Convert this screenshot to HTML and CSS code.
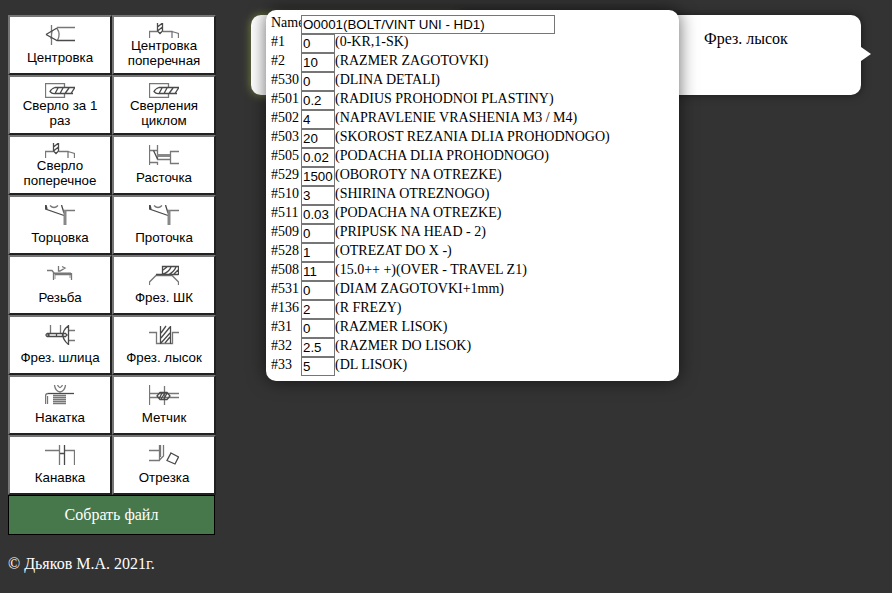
FILE: index.html
```html
<!DOCTYPE html>
<html lang="ru">
<head>
<meta charset="utf-8">
<title>O0001</title>
<link rel="stylesheet" href="styles.css">
</head>
<body>
<svg class="defs" width="0" height="0">
<symbol id="cross" viewBox="0 0 30 15"><path d="M.5 15V8.5H8.5M14 8.5H23V15M23 8.5L29.5 10.5V15"/><path class="dark" d="M8.5 0V8L11 10.500L13.5 8V0M8.5 4L13.5 0M8.5 8L13.5 4"/></symbol>
<symbol id="drill" viewBox="0 0 30 15"><path d="M19.5 4V.5H.5V14.500H19.5V11"/><path class="dark" d="M30 4.500H10Q6 6 5 8.500Q7 11 10 10.500H28M10 10.500L13 5M15 10.500L18 5M20 10.500L24 5M26 10.500L29.500 5"/></symbol>
<symbol id="turn" viewBox="0 0 30 20"><path d="M18 5.500H30M5 .5Q9 4.500 13 .5"/><path class="dark" d="M.5 0V4L19 10.500M16.500 0L19 8M1 0L2 4"/><path class="thick" d="M20 5V20"/></symbol>
</svg>
<main class="page">
  <aside class="side">
    <div class="tools">
      <button class="tool"><svg class="icon" viewBox="0 0 30 20"><path d="M6.500 0V20M12 3.500Q16 9 12.500 15.500M12 2.500H30M7 6L6 14"/><path class="dark" d="M1 9.500L12 15.500H30M1 9.500L12 3"/></svg><span>Центровка</span></button>
      <button class="tool two"><svg class="icon"><use href="#cross"/></svg><span>Центровка поперечная</span></button>
      <button class="tool two"><svg class="icon"><use href="#drill"/></svg><span>Сверло за 1 раз</span></button>
      <button class="tool two"><svg class="icon"><use href="#drill"/></svg><span>Сверления циклом</span></button>
      <button class="tool two"><svg class="icon"><use href="#cross"/></svg><span>Сверло поперечное</span></button>
      <button class="tool"><svg class="icon" viewBox="0 0 30 20"><path d="M.5 0V20M8.500 0V5.500H0M0 17.500H8.500V20M30 6.500H21.500V18.500H30M8.500 6V14.500H21"/><path class="thick" d="M8 10.500H21"/><path class="dark" d="M4.500 5.500L8.500 14"/></svg><span>Расточка</span></button>
      <button class="tool"><svg class="icon"><use href="#turn"/></svg><span>Торцовка</span></button>
      <button class="tool"><svg class="icon"><use href="#turn"/></svg><span>Проточка</span></button>
      <button class="tool"><svg class="icon" viewBox="0 0 30 20"><path class="soft" d="M8 8H26M10 7V14M25 8V13"/><path d="M2 5.500H7L9 8M13.500 1V6H15L20 3L17 1.500M8.500 7V15M26.500 8V15M9 8.500H26M10 9.500H26"/></svg><span>Резьба</span></button>
      <button class="tool"><svg class="icon" viewBox="0 0 30 20"><path d="M.5 20V17L7 10.500H23L29.500 17V20"/><path class="dark" d="M7 9.500H29.500M13.500 10V1.500H29.500V10M14 9Q20 7 22 2M14 5L18 2M19 10Q25 7 27 2M24 10L29 5"/></svg><span>Фрез. ШК</span></button>
      <button class="tool"><svg class="icon" viewBox="0 0 30 20"><path d="M5.500 0V8M15.500 0V8M24 5.500H30M24 15.500H30"/><path class="dark" d="M2 8.500H20M2 11.500H20M2 8.500Q0 10 2 11.500L4 10L2 8.500M11.500 8V12M17.500 8V12M23.500 0V20M23 1Q18 5 18 10T23 19M20 8L22 10L20 12"/></svg><span>Фрез. шлица</span></button>
      <button class="tool"><svg class="icon" viewBox="0 0 30 20"><path d="M0 7.500H7.500V18.500H23.500V7.500H30"/><path class="dark" d="M11.500 19V1M21.500 1V19M12 8L17 1M12 13L21 2M12 18L21 8M16 18L21 12"/></svg><span>Фрез. лысок</span></button>
      <button class="tool"><svg class="icon" viewBox="0 0 30 20"><path d="M.5 19V11Q.5 8.500 3 8.500M2.500 19V11M9.500 0Q10 6 15 7Q20 6 20.500 0M12.500 0Q15 5 17.500 0M8 10.500H21M8 12.500H21M8 14.500H21M8 16.500H21M8 18.500H21"/><path class="dark" d="M3 8.500H29"/></svg><span>Накатка</span></button>
      <button class="tool"><svg class="icon" viewBox="0 0 30 20"><path d="M.5 0V20M15.500 1V20M0 8.500H30M0 12.500H30"/><path class="dark" d="M8 11L11 7.500H18L21 11L18 14.500H11ZM10 14L13 8M12 14L16 8M15 14L18 8"/></svg><span>Метчик</span></button>
      <button class="tool"><svg class="icon" viewBox="0 0 30 20"><path d="M0 5.500H14.500M20 5.500H29.500V20M14.500 0V20"/><path class="dark" d="M19.500 0V20M15 8.500H19"/></svg><span>Канавка</span></button>
      <button class="tool"><svg class="icon" viewBox="0 0 30 20"><path d="M0 5.500H10M0 15.500H10.500V0M14.500 0V11L10.500 15M11.500 0V12"/><path class="dark" d="M22 8L29.500 12L26 19L18 15.500Z"/></svg><span>Отрезка</span></button>
    </div>
    <button class="build">Собрать файл</button>
    <p class="copy">© Дьяков М.А. 2021г.</p>
  </aside>
  <section class="stage">
    <div class="card start"></div>
    <div class="card step">Фрез. лысок</div>
    <form class="panel">
      <div class="row"><label>Name</label><input class="name" value="O0001(BOLT/VINT UNI - HD1)"></div>
      <div class="row"><label>#1</label><input value="0"><span>(0-KR,1-SK)</span></div>
      <div class="row"><label>#2</label><input value="10"><span>(RAZMER ZAGOTOVKI)</span></div>
      <div class="row"><label>#530</label><input value="0"><span>(DLINA DETALI)</span></div>
      <div class="row"><label>#501</label><input value="0.2"><span>(RADIUS PROHODNOI PLASTINY)</span></div>
      <div class="row"><label>#502</label><input value="4"><span>(NAPRAVLENIE VRASHENIA M3 / M4)</span></div>
      <div class="row"><label>#503</label><input value="20"><span>(SKOROST REZANIA DLIA PROHODNOGO)</span></div>
      <div class="row"><label>#505</label><input value="0.02"><span>(PODACHA DLIA PROHODNOGO)</span></div>
      <div class="row"><label>#529</label><input value="1500"><span>(OBOROTY NA OTREZKE)</span></div>
      <div class="row"><label>#510</label><input value="3"><span>(SHIRINA OTREZNOGO)</span></div>
      <div class="row"><label>#511</label><input value="0.03"><span>(PODACHA NA OTREZKE)</span></div>
      <div class="row"><label>#509</label><input value="0"><span>(PRIPUSK NA HEAD - 2)</span></div>
      <div class="row"><label>#528</label><input value="1"><span>(OTREZAT DO X -)</span></div>
      <div class="row"><label>#508</label><input value="11"><span>(15.0++ +)(OVER - TRAVEL Z1)</span></div>
      <div class="row"><label>#531</label><input value="0"><span>(DIAM ZAGOTOVKI+1mm)</span></div>
      <div class="row"><label>#136</label><input value="2"><span>(R FREZY)</span></div>
      <div class="row"><label>#31</label><input value="0"><span>(RAZMER LISOK)</span></div>
      <div class="row"><label>#32</label><input value="2.5"><span>(RAZMER DO LISOK)</span></div>
      <div class="row"><label>#33</label><input value="5"><span>(DL LISOK)</span></div>
    </form>
  </section>
</main>
</body>
</html>
```
FILE: styles.css
```css
* { box-sizing: border-box; }
body {
  margin: 0;
  height: 593px;
  overflow: hidden;
  background: #333;
  font-family: "Liberation Serif", serif;
  font-size: 16px;
}
.defs { position: absolute; }
.page { display: flex; padding: 15px 0 0 8px; }
.side { width: 208px; margin-right: 35px; }
.tools { display: grid; grid-template-columns: 104px 104px; grid-auto-rows: 60px; }
.tool {
  display: flex;
  flex-direction: column;
  align-items: center;
  padding: 8px 6px 0;
  border: 2px solid;
  border-color: #767676 #212121 #212121 #767676;
  background: #fff;
  color: #000;
  font: 13.333px/15px "Liberation Sans", sans-serif;
  text-align: center;
}
.icon {
  flex: none;
  width: 30px;
  height: 20px;
  margin-bottom: 5px;
  fill: none;
  stroke: #777;
  stroke-width: 1.3;
}
.dark { stroke: #4a4a4a; }
.thick { stroke: #888; stroke-width: 3; }
.soft { stroke: #ccc; stroke-width: 2; }
.two { padding-top: 6px; }
.two .icon { height: 15px; margin-bottom: 0; }
.build {
  display: block;
  width: 207px;
  height: 40px;
  padding: 0;
  border: 1px solid #000;
  background: #47784b;
  color: #fff;
  font: 16px "Liberation Serif", serif;
}
.copy { margin: 20px 0 0; line-height: 18px; color: #fff; }
.stage { position: relative; display: flex; width: 610px; height: 80px; }
.card { height: 80px; background: #fff; }
.start {
  width: 210px;
  border-radius: 10px 0 0 10px;
  box-shadow: 0 0 10px #7c8a45;
}
.step {
  position: relative;
  width: 400px;
  padding: 15px 0 0 243px;
  border-radius: 0 10px 10px 0;
  box-shadow: 0 0 10px rgba(0, 0, 0, .5);
}
.step::after {
  content: "";
  position: absolute;
  top: 32px;
  left: 100%;
  border: 7px solid transparent;
  border-left: 10px solid #fff;
  border-right: 0;
}
.panel {
  position: absolute;
  top: -5px;
  left: 15px;
  width: 413px;
  height: 371px;
  padding: 5px;
  border-radius: 10px;
  background: #fff;
  box-shadow: 0 0 18px rgba(0, 0, 0, .6);
  font-size: 14px;
}
.row { display: flex; height: 19px; line-height: 15px; white-space: nowrap; }
.row label { width: 30px; }
.row input {
  position: relative;
  width: 34px;
  height: 19px;
  padding: 1px;
  border: 1px solid #767676;
  border-radius: 0;
  background: #fff;
  color: #000;
  font: 13.333px "Liberation Sans", sans-serif;
}
.row .name { width: 254px; }
```
